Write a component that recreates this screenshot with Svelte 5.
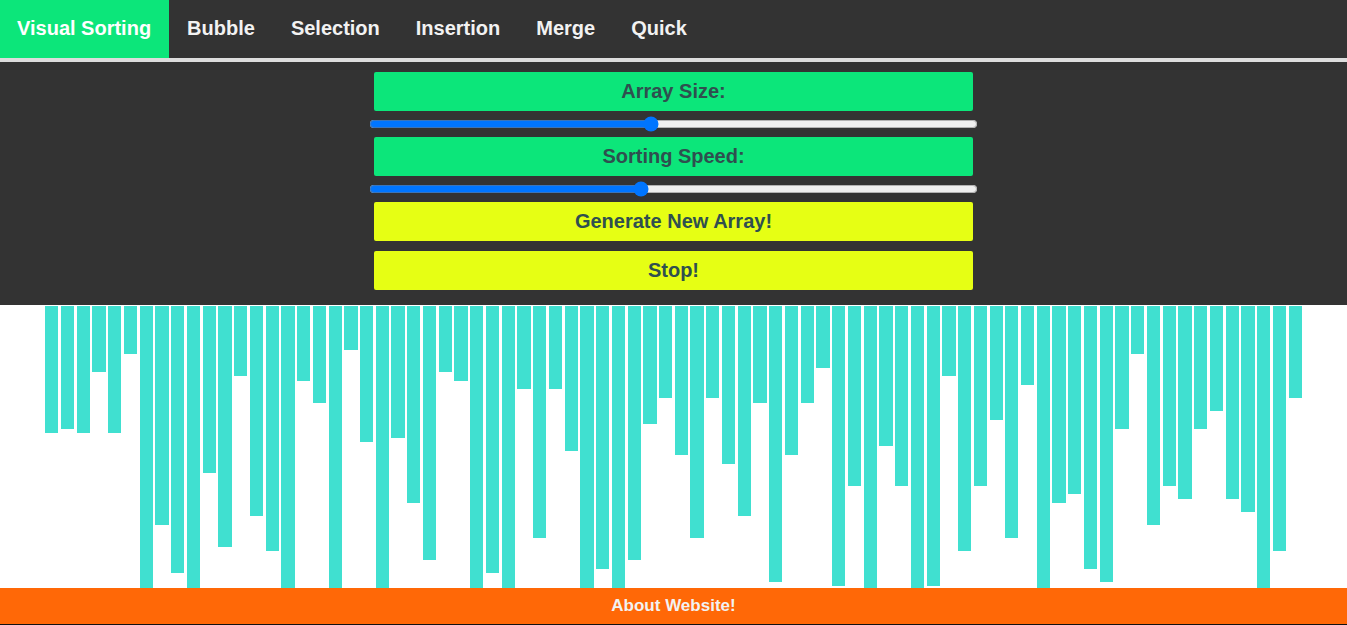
<script>
  const algorithms = ['Bubble', 'Selection', 'Insertion', 'Merge', 'Quick'];

  let size = $state(80);
  let speed = $state(445);
  let bars = $state([
    127, 123, 127, 66, 127, 48, 332, 219, 267, 350, 167, 241, 70, 210, 245, 310, 75, 97, 341, 44,
    136, 328, 132, 197, 254, 66, 75, 302, 267, 315, 83, 232, 83, 145, 337, 263, 297, 254, 118, 92,
    149, 232, 92, 158, 210, 97, 276, 149, 97, 62, 280, 180, 319, 140, 180, 345, 280, 70, 245, 180,
    114, 232, 79, 306, 197, 188, 263, 276, 123, 48, 219, 180, 193, 123, 105, 193, 206, 324, 245, 92
  ]);

  function generate() {
    bars = Array.from({ length: size }, () => 40 + Math.floor(Math.random() * 310));
  }
</script>

<div class="page">
  <nav class="nav">
    <a class="link active" href="#home">Visual Sorting</a>
    {#each algorithms as name}
      <a class="link" href={'#' + name.toLowerCase()}>{name}</a>
    {/each}
  </nav>

  <section class="panel">
    <div class="controls">
      <label class="box green" for="size">Array Size:</label>
      <input id="size" type="range" min="20" max="150" bind:value={size} oninput={generate} />
      <label class="box green" for="speed">Sorting Speed:</label>
      <input id="speed" type="range" min="0" max="1000" bind:value={speed} />
      <button class="box yellow" type="button" onclick={generate}>Generate New Array!</button>
      <button class="box yellow" type="button">Stop!</button>
    </div>
  </section>

  <main class="chart">
    {#each bars as height}
      <div class="bar" style="height: {height}px"></div>
    {/each}
  </main>

  <footer class="footer"><a href="#about">About Website!</a></footer>
</div>

<style>
  :global(body) {
    margin: 0;
    font-family: "Liberation Sans", Arial, sans-serif;
    font-weight: bold;
    background: #fff;
  }

  .page {
    display: flex;
    flex-direction: column;
    height: 100vh;
  }

  .nav {
    display: flex;
    background: #333;
    border-bottom: 4px solid #ddd;
  }

  .link {
    padding: 16px 18px 18px;
    color: #f2f2f2;
    font-size: 20px;
    line-height: 24px;
    text-decoration: none;
  }

  .link.active {
    padding-left: 17px;
    background: #0ce67a;
    color: #fff;
  }

  .panel {
    padding: 10px 0 15px;
    background: #333;
  }

  .controls {
    display: flex;
    flex-direction: column;
    width: 45%;
    margin: 0 auto;
  }

  .box {
    margin: 0 4px;
    padding: 7px 0 8px;
    border: 0;
    border-radius: 2px;
    color: darkslategray;
    font: bold 20px/24px "Liberation Sans", Arial, sans-serif;
    text-align: center;
  }

  .green {
    background: #0ce67a;
  }

  .yellow {
    background: #e6ff14;
    cursor: pointer;
  }

  .yellow + .yellow {
    margin-top: 10px;
  }

  input[type="range"] {
    height: 16px;
    margin: 5px -1px;
  }

  .chart {
    display: grid;
    grid-auto-flow: column;
    grid-auto-columns: minmax(0, 1fr);
    align-items: start;
    flex: 1 1 0;
    min-height: 0;
    padding: 1px 44px 0;
    overflow: hidden;
  }

  .bar {
    margin: 0 8%;
    background: turquoise;
  }

  .footer {
    background: #ff6807;
    border-bottom: 1px solid #111;
    text-align: center;
  }

  .footer a {
    display: block;
    padding: 8px 0;
    color: #f2f2f2;
    font-size: 17px;
    line-height: 20px;
    text-decoration: none;
  }
</style>
